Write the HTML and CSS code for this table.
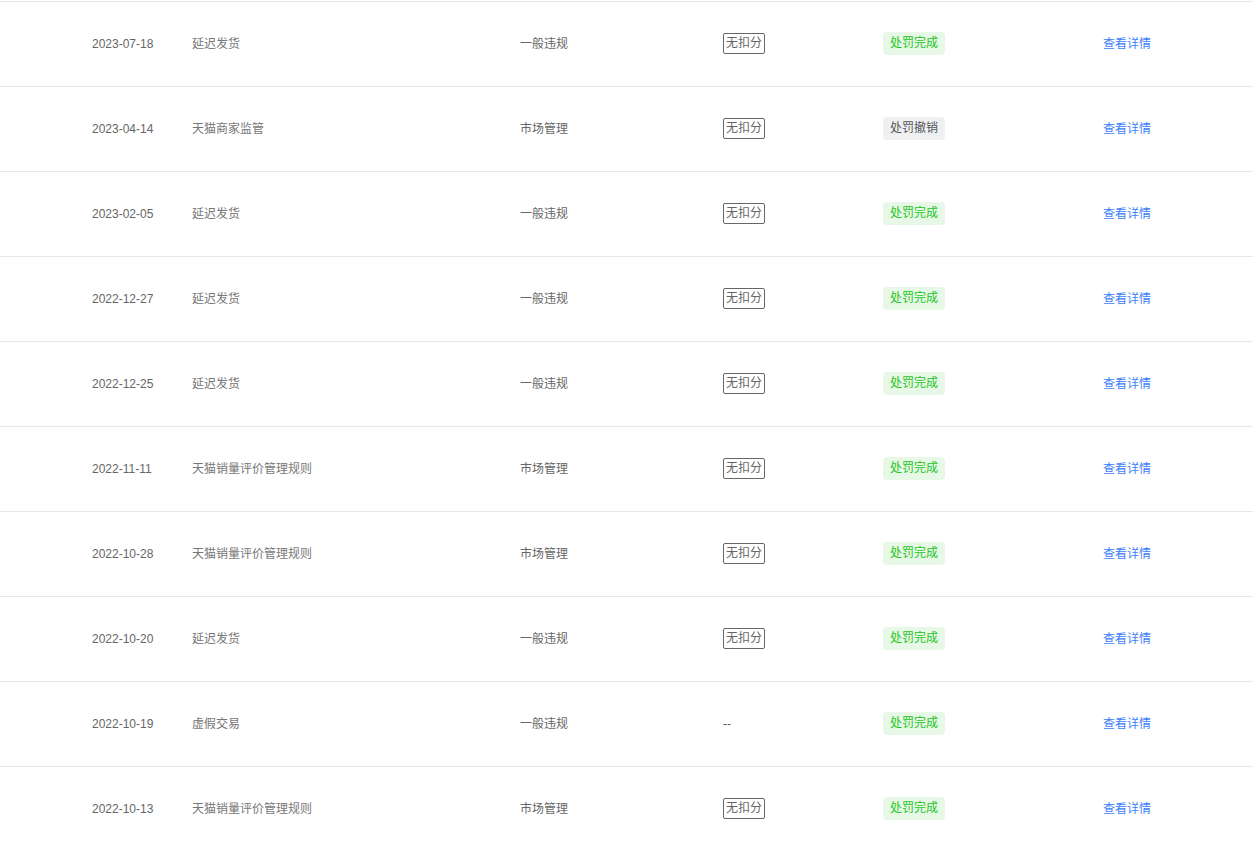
FILE: index.html
```html
<!DOCTYPE html>
<html lang="zh-CN">

<head>
    <meta charset="UTF-8">
    <meta name="viewport" content="width=device-width, initial-scale=1.0">
    <title>处罚记录</title>
    <link rel="stylesheet" href="styles.css">
</head>

<body>
    <div class="record-list">
        <div class="row">
            <span class="date">2023-07-18</span>
            <span class="title">延迟发货</span>
            <span class="category">一般违规</span>
            <span class="score"><em class="tag">无扣分</em></span>
            <span class="status"><em class="badge done">处罚完成</em></span>
            <a class="link" href="#">查看详情</a>
        </div>
        <div class="row">
            <span class="date">2023-04-14</span>
            <span class="title">天猫商家监管</span>
            <span class="category">市场管理</span>
            <span class="score"><em class="tag">无扣分</em></span>
            <span class="status"><em class="badge revoked">处罚撤销</em></span>
            <a class="link" href="#">查看详情</a>
        </div>
        <div class="row">
            <span class="date">2023-02-05</span>
            <span class="title">延迟发货</span>
            <span class="category">一般违规</span>
            <span class="score"><em class="tag">无扣分</em></span>
            <span class="status"><em class="badge done">处罚完成</em></span>
            <a class="link" href="#">查看详情</a>
        </div>
        <div class="row">
            <span class="date">2022-12-27</span>
            <span class="title">延迟发货</span>
            <span class="category">一般违规</span>
            <span class="score"><em class="tag">无扣分</em></span>
            <span class="status"><em class="badge done">处罚完成</em></span>
            <a class="link" href="#">查看详情</a>
        </div>
        <div class="row">
            <span class="date">2022-12-25</span>
            <span class="title">延迟发货</span>
            <span class="category">一般违规</span>
            <span class="score"><em class="tag">无扣分</em></span>
            <span class="status"><em class="badge done">处罚完成</em></span>
            <a class="link" href="#">查看详情</a>
        </div>
        <div class="row">
            <span class="date">2022-11-11</span>
            <span class="title">天猫销量评价管理规则</span>
            <span class="category">市场管理</span>
            <span class="score"><em class="tag">无扣分</em></span>
            <span class="status"><em class="badge done">处罚完成</em></span>
            <a class="link" href="#">查看详情</a>
        </div>
        <div class="row">
            <span class="date">2022-10-28</span>
            <span class="title">天猫销量评价管理规则</span>
            <span class="category">市场管理</span>
            <span class="score"><em class="tag">无扣分</em></span>
            <span class="status"><em class="badge done">处罚完成</em></span>
            <a class="link" href="#">查看详情</a>
        </div>
        <div class="row">
            <span class="date">2022-10-20</span>
            <span class="title">延迟发货</span>
            <span class="category">一般违规</span>
            <span class="score"><em class="tag">无扣分</em></span>
            <span class="status"><em class="badge done">处罚完成</em></span>
            <a class="link" href="#">查看详情</a>
        </div>
        <div class="row">
            <span class="date">2022-10-19</span>
            <span class="title">虚假交易</span>
            <span class="category">一般违规</span>
            <span class="score empty">--</span>
            <span class="status"><em class="badge done">处罚完成</em></span>
            <a class="link" href="#">查看详情</a>
        </div>
        <div class="row">
            <span class="date">2022-10-13</span>
            <span class="title">天猫销量评价管理规则</span>
            <span class="category">市场管理</span>
            <span class="score"><em class="tag">无扣分</em></span>
            <span class="status"><em class="badge done">处罚完成</em></span>
            <a class="link" href="#">查看详情</a>
        </div>
    </div>
</body>

</html>
```

FILE: styles.css
```css
body {
    margin: 0;
    font-family: "Liberation Sans", "Noto Sans CJK SC", sans-serif;
    font-size: 12px;
    color: #666;
    background-color: #fff;
}

.record-list {
    margin-top: 1px;
}

.row {
    display: grid;
    grid-template-columns: 100px 328px 203px 160px 220px 1fr;
    align-items: center;
    height: 83px;
    padding: 0 0 1px 92px;
    border-top: 1px solid #e8e8e8;
    line-height: 18px;
}

.date {
    color: #666;
}

.title {
    color: #777;
}

.category {
    color: #666;
}

.score.empty {
    color: #555;
}

.tag {
    display: inline-block;
    font-style: normal;
    line-height: 19px;
    padding: 0 2px;
    border: 1px solid #666;
    border-radius: 2px;
    color: #666;
}

.badge {
    display: inline-block;
    font-style: normal;
    line-height: 23px;
    padding: 0 7px;
    border-radius: 4px;
}

.badge.done {
    background-color: #e7f8e6;
    color: #22c51c;
}

.badge.revoked {
    background-color: #eff0f2;
    color: #555;
}

.link {
    color: #3c7efc;
    text-decoration: none;
}
```
